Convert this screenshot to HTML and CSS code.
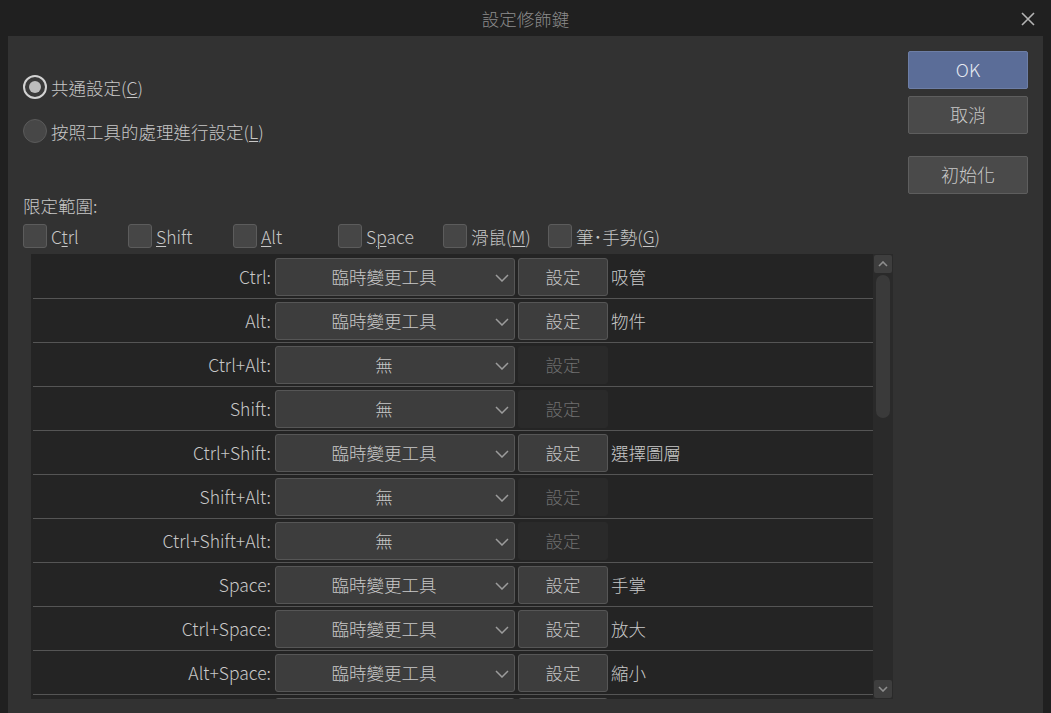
FILE: index.html
```html
<!DOCTYPE html>
<html>

<head>
    <title>設定修飾鍵</title>
    <link rel="stylesheet" href="styles.css">
</head>

<body>
    <div class="titlebar">
        <span class="title">設定修飾鍵</span>
        <svg class="close" width="16" height="16" viewBox="0 0 16 16">
            <path d="M2 2L14 14M14 2L2 14" stroke="#b4b4b4" stroke-width="1.6" fill="none" />
        </svg>
    </div>

    <div class="dialog">
        <div class="main">
            <div class="radio-row">
                <span class="radio checked"><span class="dot"></span></span>
                <span>共通設定(<u>C</u>)</span>
            </div>
            <div class="radio-row">
                <span class="radio"></span>
                <span>按照工具的處理進行設定(<u>L</u>)</span>
            </div>

            <div class="limit-label">限定範圍:</div>
            <div class="check-row">
                <div class="check"><span class="box"></span><span>C<u>t</u>rl</span></div>
                <div class="check"><span class="box"></span><span><u>S</u>hift</span></div>
                <div class="check"><span class="box"></span><span><u>A</u>lt</span></div>
                <div class="check"><span class="box"></span><span>S<u>p</u>ace</span></div>
                <div class="check"><span class="box"></span><span>滑鼠(<u>M</u>)</span></div>
                <div class="check"><span class="box"></span><span>筆･手勢(<u>G</u>)</span></div>
            </div>

            <div class="panel">
                <div class="rows">
                    <div class="row">
                        <span class="key">Ctrl:</span>
                        <div class="combo">臨時變更工具<svg class="chev" width="14" height="8" viewBox="0 0 14 8"><path d="M1 1L7 7L13 1" /></svg></div>
                        <div class="btn">設定</div>
                        <span class="tool">吸管</span>
                    </div>
                    <div class="row">
                        <span class="key">Alt:</span>
                        <div class="combo">臨時變更工具<svg class="chev" width="14" height="8" viewBox="0 0 14 8"><path d="M1 1L7 7L13 1" /></svg></div>
                        <div class="btn">設定</div>
                        <span class="tool">物件</span>
                    </div>
                    <div class="row">
                        <span class="key">Ctrl+Alt:</span>
                        <div class="combo">無<svg class="chev" width="14" height="8" viewBox="0 0 14 8"><path d="M1 1L7 7L13 1" /></svg></div>
                        <div class="btn disabled">設定</div>
                        <span class="tool"></span>
                    </div>
                    <div class="row">
                        <span class="key">Shift:</span>
                        <div class="combo">無<svg class="chev" width="14" height="8" viewBox="0 0 14 8"><path d="M1 1L7 7L13 1" /></svg></div>
                        <div class="btn disabled">設定</div>
                        <span class="tool"></span>
                    </div>
                    <div class="row">
                        <span class="key">Ctrl+Shift:</span>
                        <div class="combo">臨時變更工具<svg class="chev" width="14" height="8" viewBox="0 0 14 8"><path d="M1 1L7 7L13 1" /></svg></div>
                        <div class="btn">設定</div>
                        <span class="tool">選擇圖層</span>
                    </div>
                    <div class="row">
                        <span class="key">Shift+Alt:</span>
                        <div class="combo">無<svg class="chev" width="14" height="8" viewBox="0 0 14 8"><path d="M1 1L7 7L13 1" /></svg></div>
                        <div class="btn disabled">設定</div>
                        <span class="tool"></span>
                    </div>
                    <div class="row">
                        <span class="key">Ctrl+Shift+Alt:</span>
                        <div class="combo">無<svg class="chev" width="14" height="8" viewBox="0 0 14 8"><path d="M1 1L7 7L13 1" /></svg></div>
                        <div class="btn disabled">設定</div>
                        <span class="tool"></span>
                    </div>
                    <div class="row">
                        <span class="key">Space:</span>
                        <div class="combo">臨時變更工具<svg class="chev" width="14" height="8" viewBox="0 0 14 8"><path d="M1 1L7 7L13 1" /></svg></div>
                        <div class="btn">設定</div>
                        <span class="tool">手掌</span>
                    </div>
                    <div class="row">
                        <span class="key">Ctrl+Space:</span>
                        <div class="combo">臨時變更工具<svg class="chev" width="14" height="8" viewBox="0 0 14 8"><path d="M1 1L7 7L13 1" /></svg></div>
                        <div class="btn">設定</div>
                        <span class="tool">放大</span>
                    </div>
                    <div class="row">
                        <span class="key">Alt+Space:</span>
                        <div class="combo">臨時變更工具<svg class="chev" width="14" height="8" viewBox="0 0 14 8"><path d="M1 1L7 7L13 1" /></svg></div>
                        <div class="btn">設定</div>
                        <span class="tool">縮小</span>
                    </div>
                    <div class="row">
                        <span class="key"></span>
                        <div class="combo"></div>
                        <div class="btn"></div>
                        <span class="tool"></span>
                    </div>
                </div>
                <div class="scrollbar">
                    <div class="sb-btn">
                        <svg width="10" height="6" viewBox="0 0 10 6"><path d="M1 5L5 1L9 5" /></svg>
                    </div>
                    <div class="sb-track">
                        <div class="sb-thumb"></div>
                    </div>
                    <div class="sb-btn">
                        <svg width="10" height="6" viewBox="0 0 10 6"><path d="M1 1L5 5L9 1" /></svg>
                    </div>
                </div>
            </div>
        </div>

        <div class="side">
            <div class="side-btn primary">OK</div>
            <div class="side-btn">取消</div>
            <div class="side-btn reset">初始化</div>
        </div>
    </div>
</body>

</html>
```

FILE: styles.css
```css
body {
    margin: 0;
    background: #202020;
    font-family: "Noto Sans CJK TC", "Noto Sans", sans-serif;
    font-size: 17.5px;
    font-weight: 300;
    color: #c8c8c8;
    height: 713px;
    overflow: hidden;
}

u {
    text-decoration-thickness: 1px;
    text-underline-offset: 2px;
}

.titlebar {
    height: 36px;
    display: flex;
    align-items: center;
    justify-content: center;
    position: relative;
}

.title {
    color: #8c8c8c;
    font-size: 17.5px;
}

.close {
    position: absolute;
    right: 15px;
    top: 11px;
}

.dialog {
    margin: 0 8px;
    height: 677px;
    background: #323232;
    display: flex;
    overflow: hidden;
}

.main {
    flex: 0 0 885px;
    padding: 39px 0 0 15px;
    box-sizing: border-box;
}

.radio-row {
    display: flex;
    align-items: center;
    gap: 4px;
    height: 24px;
    margin-bottom: 20px;
}

.radio {
    width: 24px;
    height: 24px;
    box-sizing: border-box;
    border-radius: 50%;
    background: #474747;
    border: 1px solid #5a5a5a;
    display: flex;
    align-items: center;
    justify-content: center;
}

.radio.checked {
    background: #3a3a3a;
    border: 2px solid #d2d2d2;
}

.radio .dot {
    width: 12px;
    height: 12px;
    border-radius: 50%;
    background: #bcbcbc;
}

.limit-label {
    margin-top: 53px;
    height: 20px;
    line-height: 20px;
}

.check-row {
    display: flex;
    margin-top: 8px;
    height: 24px;
}

.check {
    width: 105px;
    display: flex;
    align-items: center;
    gap: 4px;
    white-space: nowrap;
}

.check .box {
    width: 24px;
    height: 24px;
    box-sizing: border-box;
    background: #464646;
    border: 1px solid #5c5c5c;
    border-radius: 3px;
    flex: none;
}

.panel {
    margin: 6px 0 0 8px;
    width: 862px;
    height: 445px;
    background: #242424;
    display: flex;
    overflow: hidden;
}

.rows {
    flex: 1;
    padding: 1px 0 0 2px;
    overflow: hidden;
}

.row {
    display: flex;
    align-items: center;
    padding: 3px 0 2px;
    height: 38px;
    border-bottom: 1px solid #555555;
}

.key {
    width: 238px;
    text-align: right;
    margin-right: 4px;
    white-space: nowrap;
    padding-bottom: 2px;
}

.tool {
    margin-left: 3px;
    padding-bottom: 2px;
}

.combo {
    width: 240px;
    height: 38px;
    box-sizing: border-box;
    background: #3d3d3d;
    border: 1px solid #565656;
    border-radius: 3px;
    display: flex;
    align-items: center;
    justify-content: center;
    position: relative;
    padding: 0 22px 2px 0;
}

.chev {
    position: absolute;
    right: 5px;
    top: 15px;
}

.chev path {
    stroke: #9c9c9c;
    stroke-width: 1.5;
    fill: none;
}

.btn {
    width: 90px;
    height: 38px;
    margin-left: 3px;
    box-sizing: border-box;
    background: #3d3d3d;
    border: 1px solid #565656;
    border-radius: 3px;
    display: flex;
    align-items: center;
    justify-content: center;
    padding-bottom: 2px;
}

.btn.disabled {
    background: #2a2a2a;
    border-color: #2a2a2a;
    color: #707070;
}

.scrollbar {
    flex: 0 0 20px;
    background: #2a2a2a;
    display: flex;
    flex-direction: column;
    padding: 1px;
    box-sizing: border-box;
}

.sb-btn {
    height: 18px;
    background: #3e3e3e;
    border-radius: 2px;
    display: flex;
    align-items: center;
    justify-content: center;
}

.sb-btn path {
    stroke: #8e8e8e;
    stroke-width: 1.6;
    fill: none;
}

.sb-track {
    flex: 1;
    padding: 2px;
}

.sb-thumb {
    height: 143px;
    background: #3a3a3a;
    border-radius: 7px;
}

.side {
    flex: 1;
    padding: 15px 15px 0 15px;
    display: flex;
    flex-direction: column;
    gap: 7px;
}

.side-btn {
    height: 38px;
    box-sizing: border-box;
    background: #4a4a4a;
    border: 1px solid #5e5e5e;
    border-radius: 2px;
    display: flex;
    align-items: center;
    justify-content: center;
    font-size: 18px;
    padding-bottom: 2px;
}

.side-btn.primary {
    background: #5b6d98;
    border-color: #6d7ea6;
    color: #e4e8f0;
}

.side-btn.reset {
    margin-top: 15px;
}
```
